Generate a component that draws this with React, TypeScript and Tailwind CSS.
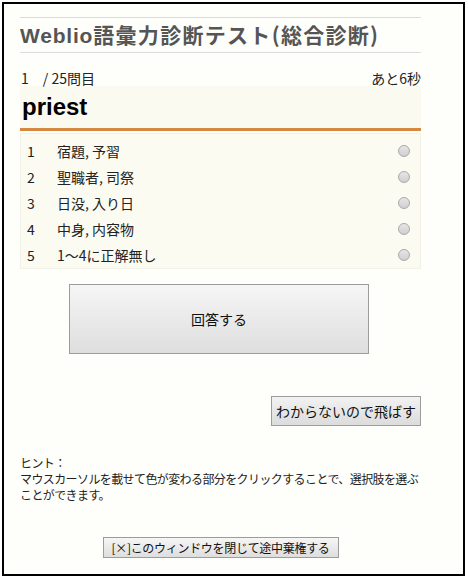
import React from "react";

const options = ["宿題, 予習", "聖職者, 司祭", "日没, 入り日", "中身, 内容物", "1〜4に正解無し"];

const jp = { fontFamily: '"Noto Sans CJK JP", "Liberation Sans", sans-serif' };

export default function App() {
  return (
    <div className="w-[468px] h-[578px] bg-white pt-[2px] pl-[2px]" style={jp}>
      <div className="w-[463px] h-[574px] border-2 border-black bg-[#fefefb] px-[16px] pt-[13px]">
        {/* header */}
        <div className="w-[401px] border-y border-[#dcdcdc] h-[36px] flex items-center">
          <h1 className="text-[21px] font-bold text-[#555] leading-none tracking-[1.3px] whitespace-nowrap">
            <span className="tracking-[0.8px]" style={{ fontFamily: '"Liberation Sans", sans-serif' }}>
              Weblio
            </span>
            語彙力診断テスト(総合診断)
          </h1>
        </div>

        <div className="w-[401px] flex justify-between items-end h-[33px] pb-[1px] text-[14px] text-[#222] leading-none">
          <span className="pl-[1px]">1　/ 25問目</span>
          <span>あと6秒</span>
        </div>

        {/* question */}
        <div className="w-[401px] h-[45px] bg-[#fbfaf0] border-b-[3px] border-[#d5883f] flex items-center pl-[2px]">
          <span
            className="text-[24px] font-bold text-black leading-none"
            style={{ fontFamily: '"Liberation Sans", Arial, sans-serif' }}
          >
            priest
          </span>
        </div>

        {/* options */}
        <div className="w-[401px] mt-[2px] bg-[#fbfbf2] border border-[#f1f1e6] pt-[4px]">
          {options.map((o, i) => (
            <div key={i} className="h-[26px] flex items-center text-[14px] text-[#222] leading-none">
              <span className="w-[36px] pl-[6px]">{i + 1}</span>
              <span className="flex-1">{o}</span>
              <span className="w-[12px] h-[12px] rounded-full border border-[#a9a9a9] bg-gradient-to-b from-[#e6e6e6] to-[#cfcfcf] mr-[10px]" />
            </div>
          ))}
        </div>

        {/* answer */}
        <div className="w-[401px] pt-[15px]">
          <button className="ml-[49px] w-[300px] h-[70px] border border-[#9c9c9c] bg-gradient-to-b from-[#f6f6f6] to-[#dedede] text-[14px] text-[#111]">
            回答する
          </button>
        </div>

        <div className="w-[401px] flex justify-end pt-[42px]">
          <button className="w-[150px] h-[30px] border border-[#9c9c9c] bg-gradient-to-b from-[#f2f2f2] to-[#dcdcdc] text-[14px] text-[#111]">
            わからないので飛ばす
          </button>
        </div>

        {/* hint */}
        <div className="w-[401px] pt-[29px] text-[12px] leading-[16px] text-[#222] tracking-[-0.6px] whitespace-nowrap">
          <p>ヒント：</p>
          <p>
            マウスカーソルを載せて色が変わる部分をクリックすることで、選択肢を選ぶ
            <br />
            ことができます。
          </p>
        </div>

        <div className="w-[401px] flex justify-center pt-[34px]">
          <button className="w-[236px] h-[21px] border border-[#9c9c9c] bg-gradient-to-b from-[#f6f6f6] to-[#dedede] text-[12px] text-[#111] leading-none tracking-[-0.3px] whitespace-nowrap">
            [×]このウィンドウを閉じて途中棄権する
          </button>
        </div>
      </div>
    </div>
  );
}
